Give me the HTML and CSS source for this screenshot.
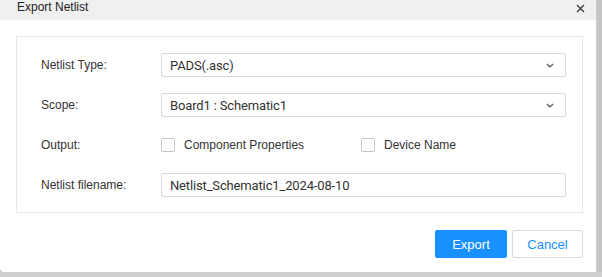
FILE: index.html
```html
<!DOCTYPE html>
<html lang="en">
<head>
  <meta charset="UTF-8" />
  <title>Export Netlist</title>
  <link rel="stylesheet" href="styles.css">
</head>
<body>

  <div class="dialog">
    <div class="dialog-header">
      <span class="dialog-title">Export Netlist</span>
      <svg class="close" width="9" height="9" viewBox="0 0 9 9">
        <path d="M1 1L8 8M8 1L1 8" stroke="#333" stroke-width="1.2" />
      </svg>
    </div>

    <div class="dialog-body">
      <div class="panel">
        <label class="field-label">Netlist Type:</label>
        <div class="select">
          <span>PADS(.asc)</span>
          <svg width="8" height="5" viewBox="0 0 8 5"><path d="M1 1L4 4L7 1" fill="none" stroke="#555" stroke-width="1.2"/></svg>
        </div>

        <label class="field-label">Scope:</label>
        <div class="select">
          <span>Board1 : Schematic1</span>
          <svg width="8" height="5" viewBox="0 0 8 5"><path d="M1 1L4 4L7 1" fill="none" stroke="#555" stroke-width="1.2"/></svg>
        </div>

        <label class="field-label">Output:</label>
        <div class="options">
          <label class="check"><span class="box"></span>Component Properties</label>
          <label class="check"><span class="box"></span>Device Name</label>
        </div>

        <label class="field-label">Netlist filename:</label>
        <div class="input">Netlist_Schematic1_2024-08-10</div>
      </div>

      <div class="actions">
        <button class="btn btn-primary">Export</button>
        <button class="btn">Cancel</button>
      </div>
    </div>
  </div>

  <div class="backdrop-bottom">
    <span></span><span></span><span></span><span></span>
  </div>

</body>
</html>
```

FILE: styles.css
```css
body {
  margin: 0;
  padding: 0;
  width: 602px;
  height: 277px;
  overflow: hidden;
  background-color: #c4c4c4;
  font-family: 'Liberation Sans', Arial, sans-serif;
  color: #333;
}

.dialog {
  width: 597px;
  height: 272px;
  background-color: #fff;
  border-bottom-left-radius: 4px;
  border-right: 1px solid #d0d0d0;
  box-sizing: border-box;
}

.dialog-header {
  height: 20px;
  background-color: #f0f0f0;
  display: flex;
  align-items: flex-start;
  justify-content: space-between;
  padding: 1px 11px 0 17px;
  box-sizing: border-box;
}

.dialog-title {
  font-size: 12px;
  line-height: 12px;
  color: #222;
}

.close {
  margin-top: 3px;
}

.dialog-body {
  padding: 16px 13px 0 16px;
}

.panel {
  border: 1px solid #e6e6e6;
  padding: 16px 16px 15px 24px;
  display: grid;
  grid-template-columns: 120px 1fr;
  row-gap: 16px;
  align-items: center;
}

.field-label {
  font-size: 12px;
  color: #333;
}

.select, .input {
  height: 24px;
  border: 1px solid #d9d9d9;
  border-radius: 2px;
  box-sizing: border-box;
  padding: 0 9px 0 8px;
  display: flex;
  align-items: center;
  justify-content: space-between;
  font-family: Roboto, sans-serif;
  font-size: 13px;
  letter-spacing: -0.15px;
  color: #333;
}

.select svg {
  margin-right: 2px;
}

.options {
  height: 24px;
  display: flex;
  align-items: center;
  font-size: 12px;
}

.check {
  display: flex;
  align-items: center;
  width: 200px;
}

.box {
  width: 14px;
  height: 14px;
  border: 1px solid #c6c6c6;
  border-radius: 2px;
  box-sizing: border-box;
  margin-right: 9px;
}

.actions {
  display: flex;
  justify-content: flex-end;
  gap: 5px;
  margin-top: 17px;
}

.btn {
  width: 71px;
  height: 28px;
  border: 1px solid #d9d9d9;
  border-radius: 2px;
  background-color: #fff;
  color: #1890ff;
  font-family: 'Liberation Sans', Arial, sans-serif;
  font-size: 13px;
  padding: 0;
}

.btn-primary {
  width: 72px;
  background-color: #1890ff;
  border-color: #1890ff;
  color: #fff;
}

.backdrop-bottom {
  height: 5px;
  background-color: #cfcfcf;
}

.backdrop-bottom span {
  display: inline-block;
  width: 1px;
  height: 5px;
  background-color: #2b2bd0;
  margin-left: 48px;
}
```
